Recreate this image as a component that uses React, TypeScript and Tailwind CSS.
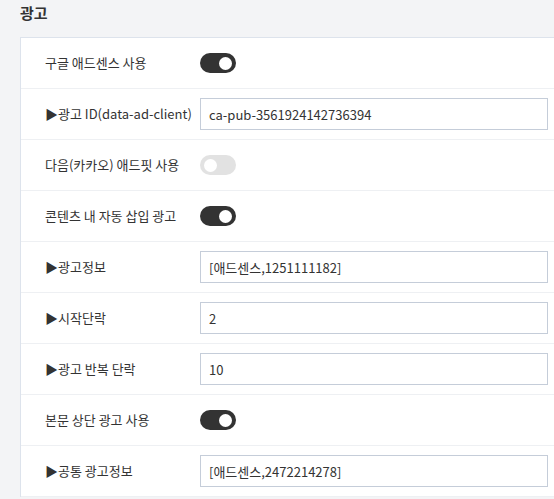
type Row =
  | { label: string; kind: "toggle"; on: boolean }
  | { label: string; kind: "input"; value: string };

const rows: Row[] = [
  { label: "구글 애드센스 사용", kind: "toggle", on: true },
  { label: "▶광고 ID(data-ad-client)", kind: "input", value: "ca-pub-3561924142736394" },
  { label: "다음(카카오) 애드핏 사용", kind: "toggle", on: false },
  { label: "콘텐츠 내 자동 삽입 광고", kind: "toggle", on: true },
  { label: "▶광고정보", kind: "input", value: "[애드센스,1251111182]" },
  { label: "▶시작단락", kind: "input", value: "2" },
  { label: "▶광고 반복 단락", kind: "input", value: "10" },
  { label: "본문 상단 광고 사용", kind: "toggle", on: true },
  { label: "▶공통 광고정보", kind: "input", value: "[애드센스,2472214278]" },
];

const Toggle = ({ on }: { on: boolean }) => (
  <div
    className={`flex h-[20px] w-[36px] items-center rounded-full px-[4px] ${
      on ? "justify-end bg-[#333333]" : "justify-start bg-[#e2e2e2]"
    }`}
  >
    <div className="h-[13px] w-[13px] rounded-full bg-white" />
  </div>
);

export default function App() {
  return (
    <div
      className="min-h-[499px] w-[554px] overflow-hidden bg-[#f3f4f6] text-[#333333]"
      style={{ fontFamily: '"Noto Sans CJK KR", "Noto Sans", sans-serif' }}
    >
      <h2 className="h-[37px] pl-[20px] pt-[2px] text-[15px] font-bold leading-[22px]">광고</h2>
      <div className="ml-[20px] w-[560px] border-l border-t border-[#dde3ec] bg-white">
        {rows.map((row, i) => (
          <div
            key={i}
            className="flex h-[51px] items-center border-b border-[#eef0f3] pl-[24px]"
          >
            <div className="w-[155px] shrink-0 text-[13px] leading-[18px]">{row.label}</div>
            {row.kind === "toggle" ? (
              <Toggle on={row.on} />
            ) : (
              <input
                readOnly
                value={row.value}
                className="h-[32px] w-[348px] border border-[#c5cdd9] bg-white px-[8px] text-[13px] text-[#333333] outline-none"
                style={{ fontFamily: '"Noto Sans CJK KR", "Noto Sans", sans-serif' }}
              />
            )}
          </div>
        ))}
      </div>
    </div>
  );
}
